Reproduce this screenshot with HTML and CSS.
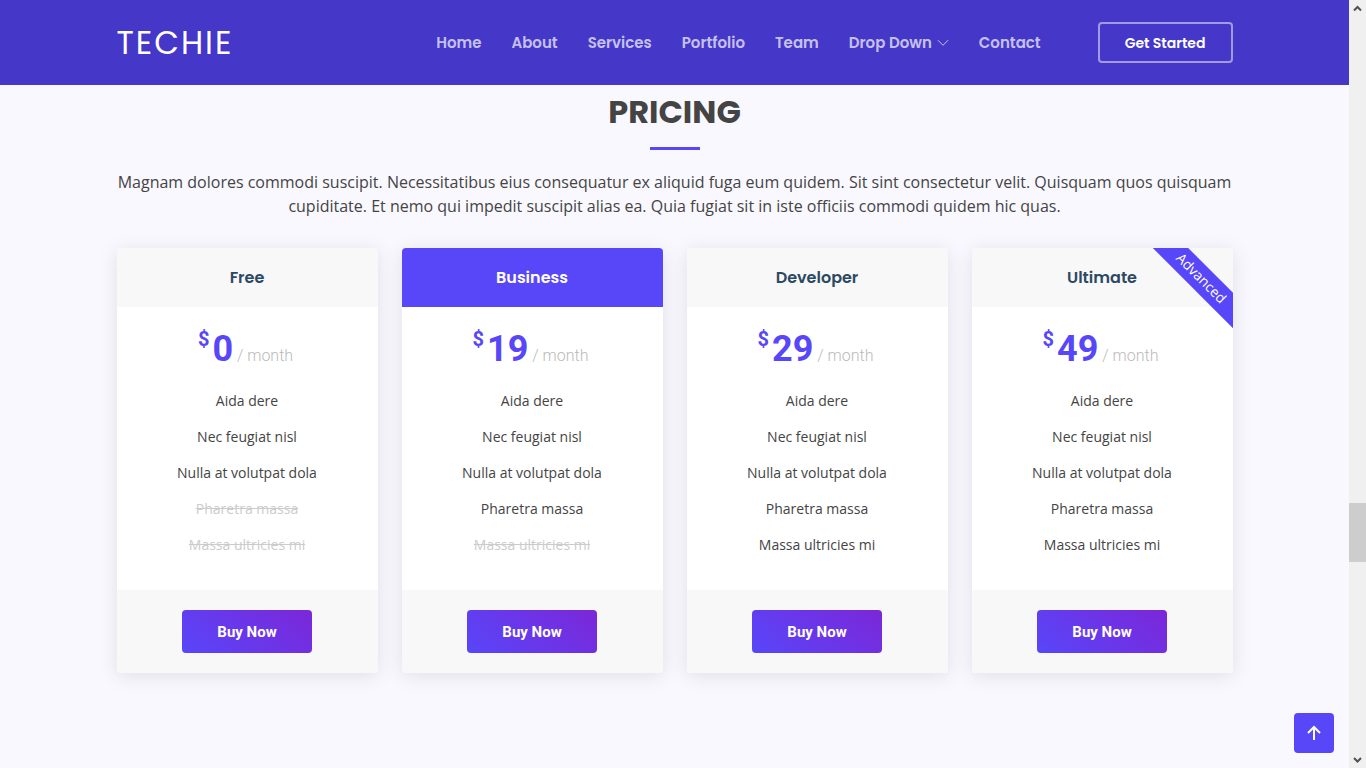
FILE: index.html
```html
<!DOCTYPE html>
<html lang="en">
<head>
<meta charset="utf-8">
<title>Techie - Pricing</title>
<link rel="stylesheet" href="styles.css">
</head>
<body>
<div class="page">
  <header class="header">
    <div class="container header-row">
      <a class="logo" href="#">TECHIE</a>
      <nav class="nav">
        <a href="#">Home</a>
        <a href="#">About</a>
        <a href="#">Services</a>
        <a href="#">Portfolio</a>
        <a href="#">Team</a>
        <a href="#">Drop Down
          <svg class="chevron" viewBox="0 0 12 12" aria-hidden="true"><path d="M1.2 3.5 6 8.3l4.8-4.8"/></svg>
        </a>
        <a href="#">Contact</a>
      </nav>
      <a class="get-started" href="#">Get Started</a>
    </div>
  </header>

  <main class="container pricing">
    <h2 class="title">PRICING</h2>
    <p class="intro">Magnam dolores commodi suscipit. Necessitatibus eius consequatur ex aliquid fuga eum quidem. Sit sint consectetur velit. Quisquam quos quisquam cupiditate. Et nemo qui impedit suscipit alias ea. Quia fugiat sit in iste officiis commodi quidem hic quas.</p>
    <div class="plans">
      <article class="plan">
        <h3 class="plan-name">Free</h3>
        <h4 class="price"><sup>$</sup>0<span> / month</span></h4>
        <ul class="features">
          <li>Aida dere</li>
          <li>Nec feugiat nisl</li>
          <li>Nulla at volutpat dola</li>
          <li class="na">Pharetra massa</li>
          <li class="na">Massa ultricies mi</li>
        </ul>
        <div class="buy-row"><a class="buy" href="#">Buy Now</a></div>
      </article>
      <article class="plan featured">
        <h3 class="plan-name">Business</h3>
        <h4 class="price"><sup>$</sup>19<span> / month</span></h4>
        <ul class="features">
          <li>Aida dere</li>
          <li>Nec feugiat nisl</li>
          <li>Nulla at volutpat dola</li>
          <li>Pharetra massa</li>
          <li class="na">Massa ultricies mi</li>
        </ul>
        <div class="buy-row"><a class="buy" href="#">Buy Now</a></div>
      </article>
      <article class="plan">
        <h3 class="plan-name">Developer</h3>
        <h4 class="price"><sup>$</sup>29<span> / month</span></h4>
        <ul class="features">
          <li>Aida dere</li>
          <li>Nec feugiat nisl</li>
          <li>Nulla at volutpat dola</li>
          <li>Pharetra massa</li>
          <li>Massa ultricies mi</li>
        </ul>
        <div class="buy-row"><a class="buy" href="#">Buy Now</a></div>
      </article>
      <article class="plan">
        <span class="ribbon">Advanced</span>
        <h3 class="plan-name">Ultimate</h3>
        <h4 class="price"><sup>$</sup>49<span> / month</span></h4>
        <ul class="features">
          <li>Aida dere</li>
          <li>Nec feugiat nisl</li>
          <li>Nulla at volutpat dola</li>
          <li>Pharetra massa</li>
          <li>Massa ultricies mi</li>
        </ul>
        <div class="buy-row"><a class="buy" href="#">Buy Now</a></div>
      </article>
    </div>
  </main>
  <a class="back-to-top" href="#" aria-label="Back to top">
    <svg viewBox="0 0 16 16" aria-hidden="true"><path d="M8 15V2M2 8l6-6 6 6"/></svg>
  </a>
</div>
<div class="scrollbar" aria-hidden="true">
  <svg class="arrow" viewBox="0 0 17 17"><path d="M5 10.5 8.5 7l3.5 3.5"/></svg>
  <div class="track"><div class="thumb"></div></div>
  <svg class="arrow" viewBox="0 0 17 17"><path d="M5 7l3.5 3.5L12 7"/></svg>
</div>
</body>
</html>
```
FILE: styles.css
```css
* {
  box-sizing: border-box;
}

body {
  margin: 0;
  min-height: 100vh;
  display: grid;
  grid-template-columns: minmax(0, 1fr) 17px;
  background: #f9f8ff;
  color: #444;
  font: 16px/24px "Open Sans", sans-serif;
}

a {
  text-decoration: none;
}

.container {
  width: 100%;
  max-width: 1140px;
  margin: 0 auto;
  padding: 0 12px;
}

.header {
  background: #4537c8;
  padding: 22px 0;
}

.header-row {
  display: flex;
  align-items: center;
}

.logo {
  margin-right: auto;
  color: #fff;
  font: 400 32px/41px Poppins, Lato, sans-serif;
  letter-spacing: 2px;
}

.nav {
  display: flex;
  gap: 30px;
  padding-top: 1px;
}

.nav a {
  display: flex;
  align-items: center;
  gap: 5px;
  color: rgba(255, 255, 255, 0.7);
  font: 600 15px/24px Poppins, Inter, sans-serif;
}

.chevron {
  width: 12px;
  height: 12px;
  fill: none;
  stroke: currentColor;
  stroke-linecap: round;
}

.get-started {
  margin-left: 57px;
  padding: 9px 25px 7px;
  border: 2px solid rgba(255, 255, 255, 0.5);
  border-radius: 4px;
  color: #fff;
  font: 600 14px/21px Poppins, Inter, sans-serif;
}

.title {
  margin: 0;
  padding-top: 8px;
  text-align: center;
  font: 700 32px/38px Poppins, Inter, sans-serif;
}

.title::after {
  content: "";
  display: block;
  width: 50px;
  height: 3px;
  margin: 16px auto 20px;
  background: #5846f9;
}

.intro {
  margin: 0 0 30px;
  text-align: center;
}

.plans {
  display: grid;
  grid-template-columns: repeat(4, 1fr);
  gap: 24px;
}

.plan {
  position: relative;
  overflow: hidden;
  border-radius: 4px;
  background: #fff;
  box-shadow: 0 3px 20px rgba(0, 0, 0, 0.1);
  text-align: center;
}

.plan-name {
  margin: 0;
  padding: 20px;
  background: #f8f8f8;
  color: #2c4964;
  font: 600 16px/19px Poppins, Inter, sans-serif;
}

.featured .plan-name {
  background: #5846f9;
  color: #fff;
}

.price {
  margin: 0;
  padding: 21px 0 13px;
  color: #5846f9;
  font: 700 36px/43px Roboto, sans-serif;
}

.price sup {
  position: relative;
  top: -15px;
  left: -3px;
  vertical-align: baseline;
  font-size: 20px;
  line-height: 20px;
}

.price span {
  color: #bababa;
  font-size: 16px;
  font-weight: 300;
}

.features {
  margin: 0;
  padding: 0 0 20px;
  list-style: none;
  font-size: 14px;
  line-height: 21px;
}

.features li {
  padding-bottom: 15px;
}

.na {
  color: #ccc;
  text-decoration: line-through;
}

.buy-row {
  display: flex;
  justify-content: center;
  padding: 20px;
  background: #f8f8f8;
}

.buy {
  padding: 11px 35px 9px;
  border-radius: 4px;
  background: linear-gradient(42deg, #5846f9 0%, #7b27d8 100%);
  color: #fff;
  font: 700 15px/23px Roboto, sans-serif;
}

.ribbon {
  position: absolute;
  top: 18px;
  right: -68px;
  width: 200px;
  padding: 1px 0 3px;
  transform: rotate(45deg);
  background: #5846f9;
  color: #fff;
  font-size: 14px;
  line-height: 21px;
}

.back-to-top {
  position: fixed;
  right: 32px;
  bottom: 15px;
  display: flex;
  align-items: center;
  justify-content: center;
  width: 40px;
  height: 40px;
  border-radius: 4px;
  background: #5846f9;
}

.back-to-top svg {
  width: 16px;
  height: 16px;
  fill: none;
  stroke: #fff;
  stroke-width: 2;
}

.scrollbar {
  display: flex;
  flex-direction: column;
  background: #f0f0f0;
}

.arrow {
  width: 17px;
  height: 17px;
  fill: none;
  stroke: #505050;
  stroke-width: 2;
}

.track {
  display: flex;
  flex-direction: column;
  flex: 1;
}

.track::before {
  content: "";
  flex: 486;
}

.track::after {
  content: "";
  flex: 189;
}

.thumb {
  flex: 59;
  background: #cdcdcd;
}
```
